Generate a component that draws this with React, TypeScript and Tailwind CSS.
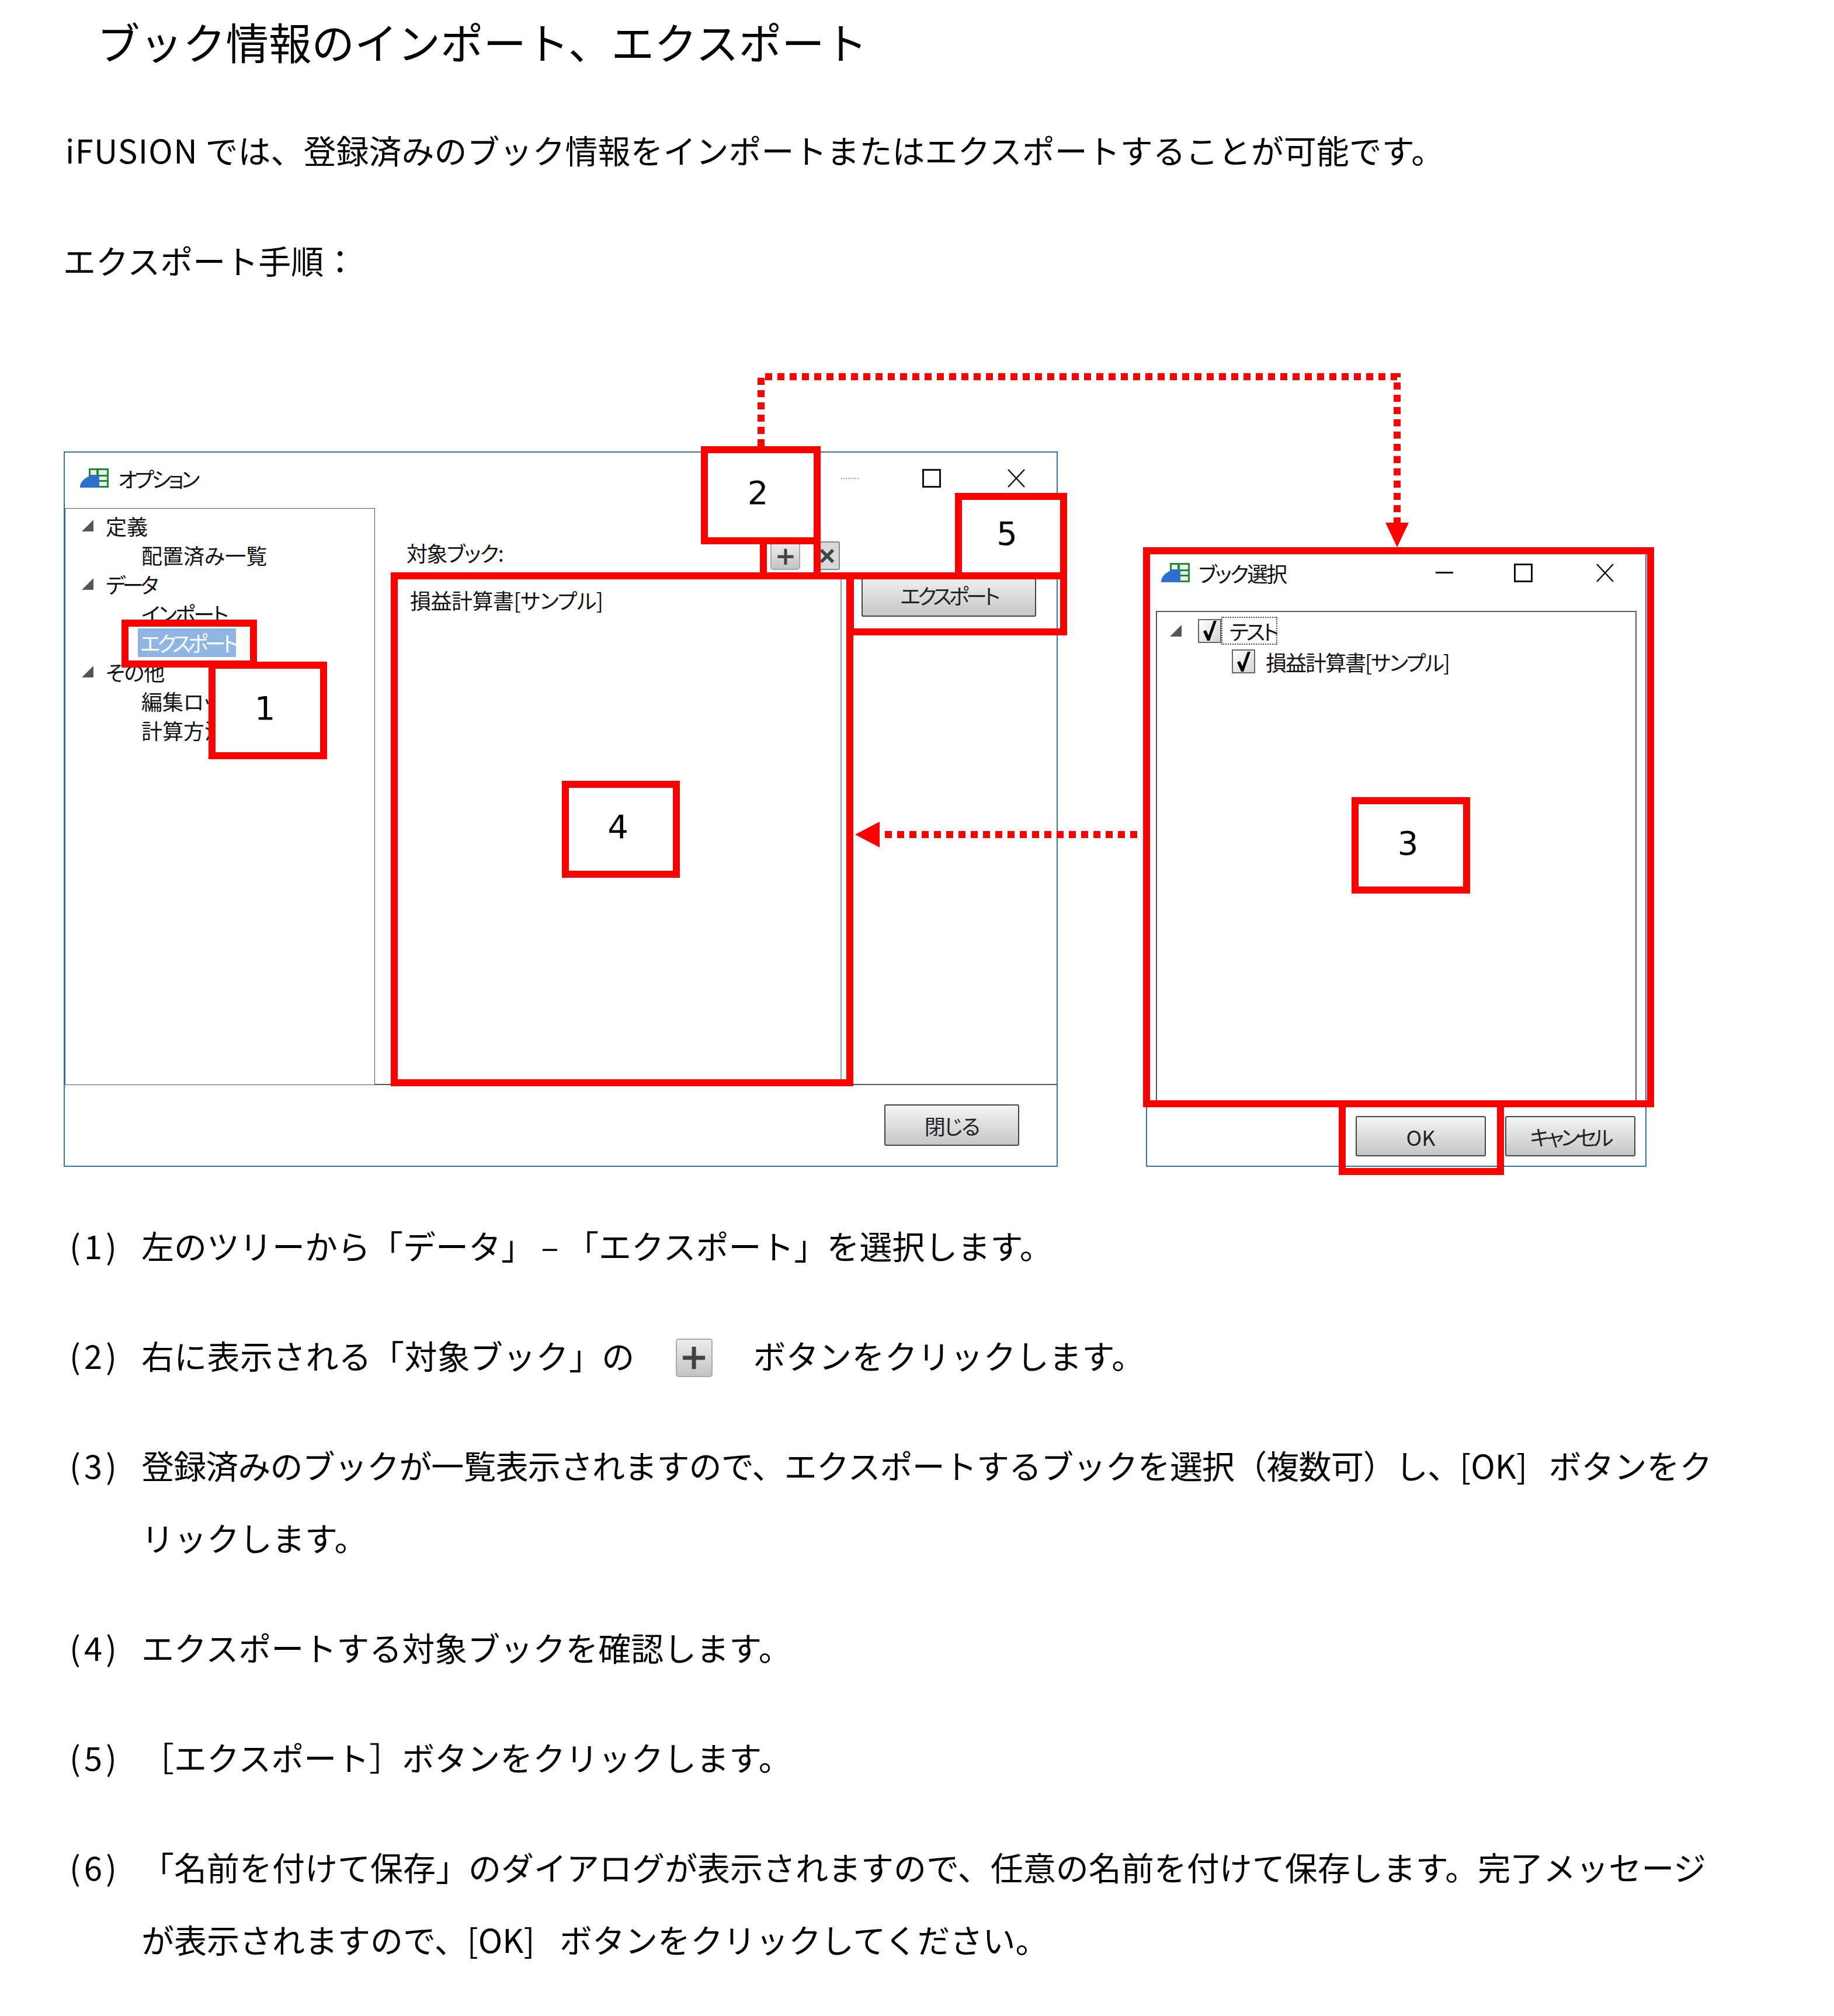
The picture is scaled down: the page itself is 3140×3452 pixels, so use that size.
import type { ReactNode } from 'react';

const redBox = 'absolute box-border border-[12px] border-[#f00] flex items-center justify-center pr-[10px] pb-[8px] font-["DejaVu_Sans",sans-serif] text-[56px] text-black';

function AppIcon() {
  return (
    <svg viewBox="0 0 49 33" className="h-[33px] w-[49px] shrink-0">
      <rect x="15" y="0" width="34" height="33" fill="#1f8a3b" />
      <rect x="18" y="3" width="10" height="8" fill="#e8f5e4" />
      <rect x="32" y="3" width="14" height="8" fill="#e8f5e4" />
      <rect x="32" y="14" width="14" height="6" fill="#e8f5e4" />
      <rect x="32" y="23" width="14" height="7" fill="#e8f5e4" />
      <path d="M0 33 C0 22 8 18 14 14 C20 9 30 11 33 14 L33 33 Z" fill="#2f6fd0" />
    </svg>
  );
}

function Expander() {
  return (
    <svg viewBox="0 0 20 20" className="h-[20px] w-[20px] shrink-0">
      <polygon points="0,20 20,20 20,0" fill="#555" />
    </svg>
  );
}

function MaxIcon() {
  return <div className="box-border h-[32px] w-[32px] border-[3px] border-[#111]" />;
}

function CloseIcon() {
  return (
    <svg viewBox="0 0 32 32" className="h-[32px] w-[32px]">
      <path d="M2 1 L30 31 M30 1 L2 31" stroke="#111" strokeWidth="2.5" fill="none" />
    </svg>
  );
}

function Check() {
  return (
    <div className="box-border flex h-[41px] w-[40px] items-center justify-center border-2 border-[#666] bg-gradient-to-br from-white to-[#d4d4d4]">
      <svg viewBox="0 0 26 36" className="h-[36px] w-[26px]">
        <path d="M2 19 L9 35 L13 35 L25 1 L20 1 L11 26 L7 17 Z" fill="#000" />
      </svg>
    </div>
  );
}

function Btn({ className, children }: { className: string; children: ReactNode }) {
  return (
    <div className={`box-border flex items-center justify-center rounded-[3px] border-2 border-[#444] bg-gradient-to-b from-[#f4f4f4] to-[#c6c6c6] text-[36px] text-[#222] ${className}`}>
      {children}
    </div>
  );
}

function PlusIcon({ className }: { className: string }) {
  return (
    <span className={`inline-flex items-center justify-center rounded-[5px] border-2 border-[#aaa] bg-gradient-to-b from-[#ececec] to-[#c4c4c4] ${className}`}>
      <svg viewBox="0 0 40 40" className="h-[68%] w-[68%]">
        <path d="M20 1 V39 M1 20 H39" stroke="#3f4246" strokeWidth="7" fill="none" />
      </svg>
    </span>
  );
}

function Item({ n, children }: { n: number; children: ReactNode }) {
  return (
    <div className="mb-[64px] flex">
      <div className="w-[123px] shrink-0 tracking-[6px]">({n})</div>
      <div>{children}</div>
    </div>
  );
}

function OptionWindow() {
  const parent = 'flex h-[50px] items-center gap-[21px] pl-[28px]';
  const child = 'flex h-[50px] items-center pl-[130px]';
  return (
    <div className="absolute left-[109px] top-[264px] box-border flex h-[1225px] w-[1702px] flex-col border-2 border-[#2e75b6] text-[36px] text-[#111] [font-feature-settings:'palt']">
      <div className="flex h-[95px] shrink-0 items-center pb-[8px] pl-[26px] pr-[53px]">
        <AppIcon />
        <span className="ml-[16px] tracking-[-4.5px]">オプション</span>
        <div className="ml-auto w-[30px] border-t-2 border-dotted border-[#aaa]" />
        <div className="ml-[109px]"><MaxIcon /></div>
        <div className="ml-[113px]"><CloseIcon /></div>
      </div>
      <div className="flex h-[988px] shrink-0">
        <div className="box-border w-[531px] shrink-0 border border-[#555] pt-[4px]">
          <div className={parent}><Expander /><span>定義</span></div>
          <div className={child}>配置済み一覧</div>
          <div className={parent}><Expander /><span className="tracking-[-5px]">データ</span></div>
          <div className={`${child} tracking-[-3px]`}>インポート</div>
          <div className={child}>
            <span className="ml-[-6px] flex h-[49px] w-[168px] items-center whitespace-nowrap bg-[#8fb6e3] pl-[4px] tracking-[-5.5px] text-white">エクスポート</span>
          </div>
          <div className={parent}><Expander /><span className="tracking-[-1px]">その他</span></div>
          <div className={child}>編集ロック</div>
          <div className={child}>計算方法</div>
        </div>
        <div className="box-border flex flex-1 flex-col border-b-2 border-[#555]">
          <div className="flex h-[114px] shrink-0 items-end pl-[54px]">
            <span className="mb-[11px] w-[180px] shrink-0 tracking-[-1.5px]">対象ブック:</span>
            <PlusIcon className="mb-[8px] ml-[443px] h-[46px] w-[51px]" />
            <div className="mb-[8px] ml-[23px] box-border flex h-[49px] w-[45px] items-center justify-center rounded-[3px] border-2 border-[#888] bg-[#d8d8d8]">
              <svg viewBox="0 0 30 30" className="h-[28px] w-[28px]">
                <path d="M4 4 L26 26 M26 4 L4 26" stroke="#3c4a44" strokeWidth="6" fill="none" />
              </svg>
            </div>
          </div>
          <div className="flex flex-1">
            <div className="box-border w-[799px] border-r-2 border-[#8a9aa8] pl-[60px] pt-[16px] tracking-[-0.5px]">損益計算書[サンプル]</div>
            <Btn className="ml-[34px] mt-[-2px] h-[74px] w-[299px] tracking-[-5px]">エクスポート</Btn>
          </div>
        </div>
      </div>
      <div className="flex flex-1 justify-end pr-[64px] pt-[33px]">
        <Btn className="h-[71px] w-[231px] tracking-[-2px]">閉じる</Btn>
      </div>
    </div>
  );
}

function BookWindow() {
  return (
    <div className="absolute left-[1962px] top-[436px] box-border flex h-[1053px] w-[857px] flex-col border-2 border-[#2e75b6] text-[36px] text-[#111] [font-feature-settings:'palt']">
      <div className="flex h-[99px] shrink-0 items-center pb-[32px] pl-[24px] pr-[53px]">
        <AppIcon />
        <span className="ml-[15px] tracking-[-3px]">ブック選択</span>
        <div className="ml-auto h-[3px] w-[30px] bg-[#111]" />
        <div className="ml-[104px]"><MaxIcon /></div>
        <div className="ml-[108px]"><CloseIcon /></div>
      </div>
      <div className="mx-[15px] box-border h-[838px] shrink-0 border-x-2 border-t-2 border-[#555] pl-[22px] pt-[8px]">
        <div className="flex h-[48px] items-center">
          <div className="w-[20px]"><Expander /></div>
          <div className="ml-[28px]"><Check /></div>
          <span className="box-border flex h-[48px] w-[96px] items-center whitespace-nowrap border-2 border-dotted border-[#444] pl-[12px] leading-none tracking-[-4px]">テスト</span>
        </div>
        <div className="mt-[8px] flex h-[41px] items-center pl-[106px]">
          <Check />
          <span className="ml-[18px] tracking-[-2px]">損益計算書[サンプル]</span>
        </div>
      </div>
      <div className="flex flex-1 items-start justify-end gap-[33px] pr-[17px] pt-[27px]">
        <Btn className="h-[69px] w-[223px]">OK</Btn>
        <Btn className="h-[69px] w-[223px] tracking-[-5px]">キャンセル</Btn>
      </div>
    </div>
  );
}

export default function App() {
  return (
    <div className="h-[3452px] w-[3140px] overflow-hidden bg-white font-['Noto_Sans_CJK_JP','Noto_Sans',sans-serif] text-[56px] leading-[124px] text-black">
      <div className="h-[146px] pl-[166px] text-[73.5px] leading-[140px]">ブック情報のインポート、エクスポート</div>
      <div className="mt-[48px] pl-[112px]">
        <span className="tracking-[1.3px]">iFUSION</span> では、登録済みのブック情報をインポートまたはエクスポートすることが可能です。
      </div>
      <div className="mt-[65px] pl-[108px]">エクスポート手順：</div>

      <div className="relative mt-[2px] h-[1561px] leading-normal">
        <OptionWindow />
        <BookWindow />

        <svg className="absolute left-0 top-0 h-[1000px] w-[3140px]" viewBox="0 0 3140 1000">
          <path d="M1303 255 V136 H2392 V390" stroke="#f00" strokeWidth="12" strokeDasharray="12 9" fill="none" />
          <polygon points="2372,386 2412,386 2392,428" fill="#f00" />
          <path d="M1947 920 H1506" stroke="#f00" strokeWidth="12" strokeDasharray="12 9" fill="none" />
          <polygon points="1464,920 1506,898 1506,942" fill="#f00" />
        </svg>

        <div className={`${redBox} left-[208px] top-[552px] h-[82px] w-[232px]`} />
        <div className={`${redBox} left-[357px] top-[624px] h-[167px] w-[203px] bg-white`}>1</div>
        <div className={`${redBox} left-[1301px] top-[411px] h-[72px] w-[104px]`} />
        <div className={`${redBox} left-[1200px] top-[255px] h-[168px] w-[205px] bg-white`}>2</div>
        <div className={`${redBox} left-[669px] top-[471px] h-[880px] w-[792px]`} />
        <div className={`${redBox} left-[962px] top-[828px] h-[166px] w-[202px] bg-white`}>4</div>
        <div className={`${redBox} left-[1635px] top-[335px] h-[148px] w-[192px] bg-white pb-[4px] pr-[14px]`}>5</div>
        <div className={`${redBox} left-[1450px] top-[471px] h-[108px] w-[377px]`} />
        <div className={`${redBox} left-[1957px] top-[428px] h-[959px] w-[875px]`} />
        <div className={`${redBox} left-[2314px] top-[856px] h-[165px] w-[203px] bg-white`}>3</div>
        <div className={`${redBox} left-[2292px] top-[1375px] h-[128px] w-[283px]`} />
      </div>

      <div className="pl-[119px]">
        <Item n={1}>左のツリーから「データ」 – 「エクスポート」を選択します。</Item>
        <Item n={2}>
          <span className="tracking-[0.3px]">右に表示される「対象ブック」の</span>
          <PlusIcon className="mx-[70px] mb-[8px] h-[66px] w-[63px] align-middle" />
          <span className="tracking-[0.3px]">ボタンをクリックします。</span>
        </Item>
        <Item n={3}>
          <span className="tracking-[-0.85px]">登録済みのブックが一覧表示されますので、エクスポートするブックを選択（複数可）し、</span>
          <span className="mr-[24px]">[OK] </span>ボタンをク
          <br />
          リックします。
        </Item>
        <Item n={4}>エクスポートする対象ブックを確認します。</Item>
        <Item n={5}>［エクスポート］ボタンをクリックします。</Item>
        <Item n={6}>
          「名前を付けて保存」のダイアログが表示されますので、任意の名前を付けて保存します。完了メッセージ
          <br />
          が表示されますので、<span className="mr-[30px]">[OK] </span>ボタンをクリックしてください。
        </Item>
      </div>
    </div>
  );
}
